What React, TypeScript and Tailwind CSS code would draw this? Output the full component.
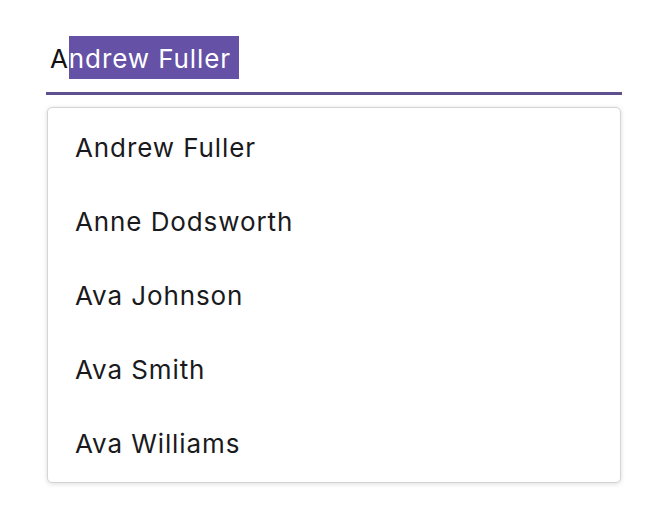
import React from 'react';

const people = ['Andrew Fuller', 'Anne Dodsworth', 'Ava Johnson', 'Ava Smith', 'Ava Williams'];

const App: React.FC = () => {
  return (
    <div className="min-h-screen bg-white pt-[36px] pl-[46px] font-['Inter',sans-serif]">
      <div className="w-[576px]">
        {/* Input with typed "A" and autocompleted remainder selected */}
        <div className="h-[59px] border-b-[3px] border-[#5f4f8f] pl-[4px] flex items-start text-[26px] tracking-[0.9px] leading-[41px]">
          <span className="pt-[2px] text-[#111111]">A</span>
          <span className="pt-[2px] text-white bg-[#6551a6] pr-[8px]">ndrew Fuller</span>
        </div>

        {/* Suggestion popup */}
        <div className="mt-[12px] mx-[1px] rounded-[5px] border border-[#d4d4d4] bg-white shadow-[0_1px_5px_rgba(0,0,0,0.14)] py-[2px]">
          {people.map((name) => (
            <div key={name} className="h-[74px] flex items-center pl-[27px] text-[26px] tracking-[0.9px] text-[#1a1a1d]">
              {name}
            </div>
          ))}
        </div>
      </div>
    </div>
  );
};

export default App;
